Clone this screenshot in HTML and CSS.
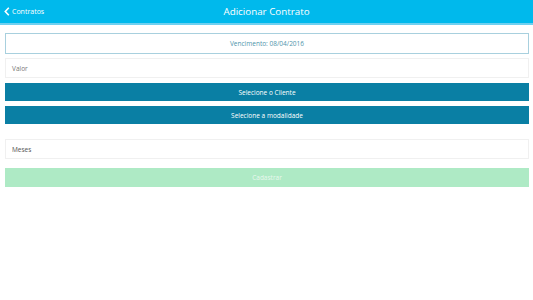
FILE: index.html
```html
<!DOCTYPE html>
<html>
<head>
<meta charset="utf-8">
<link rel="stylesheet" href="styles.css">
</head>
<body>
<header class="bar">
  <div class="back">
    <svg class="chev" width="6" height="9" viewBox="0 0 6 9"><path d="M4.8 0.8 L1.3 4.5 L4.8 8.2" fill="none" stroke="#fff" stroke-width="1.6"/></svg>
    <span>Contratos</span>
  </div>
  <div class="title">Adicionar Contrato</div>
</header>
<main class="form">
  <div class="due">Vencimento: 08/04/2016</div>
  <div class="field">Valor</div>
  <div class="btn">Selecione o Cliente</div>
  <div class="btn">Selecione a modalidade</div>
  <div class="field meses">Meses</div>
  <div class="submit">Cadastrar</div>
</main>
</body>
</html>
```

FILE: styles.css
```css
html, body {
  margin: 0;
  padding: 0;
  background: #fff;
  font-family: "Open Sans", "Noto Sans", sans-serif;
}
.bar {
  position: relative;
  height: 23px;
  background: #00b9ec;
  border-bottom: 2px solid #6fd0f0;
  display: flex;
  align-items: center;
  justify-content: center;
}
.back {
  position: absolute;
  left: 4px;
  top: 0;
  height: 23px;
  display: flex;
  align-items: center;
  gap: 2px;
  color: #fff;
  font-size: 7px;
}
.title {
  color: #fff;
  font-size: 9.8px;
}
.form {
  padding: 8px 4px 0 5px;
  display: flex;
  flex-direction: column;
}
.due {
  height: 19px;
  border: 1px solid #a8d0de;
  display: flex;
  align-items: center;
  justify-content: center;
  color: #4e94ab;
  font-size: 6.5px;
}
.field {
  margin-top: 4px;
  height: 18px;
  border: 1px solid #f0f0f0;
  display: flex;
  align-items: center;
  padding-left: 6px;
  color: #777;
  font-size: 6.5px;
}
.btn {
  margin-top: 5px;
  height: 18px;
  background: #0a7fa4;
  color: #fff;
  display: flex;
  align-items: center;
  justify-content: center;
  font-size: 6.5px;
}
.meses {
  margin-top: 15px;
  color: #555;
}
.submit {
  margin-top: 9px;
  height: 19px;
  background: #aeeac5;
  color: #e8f8ee;
  display: flex;
  align-items: center;
  justify-content: center;
  font-size: 6.5px;
}
```
